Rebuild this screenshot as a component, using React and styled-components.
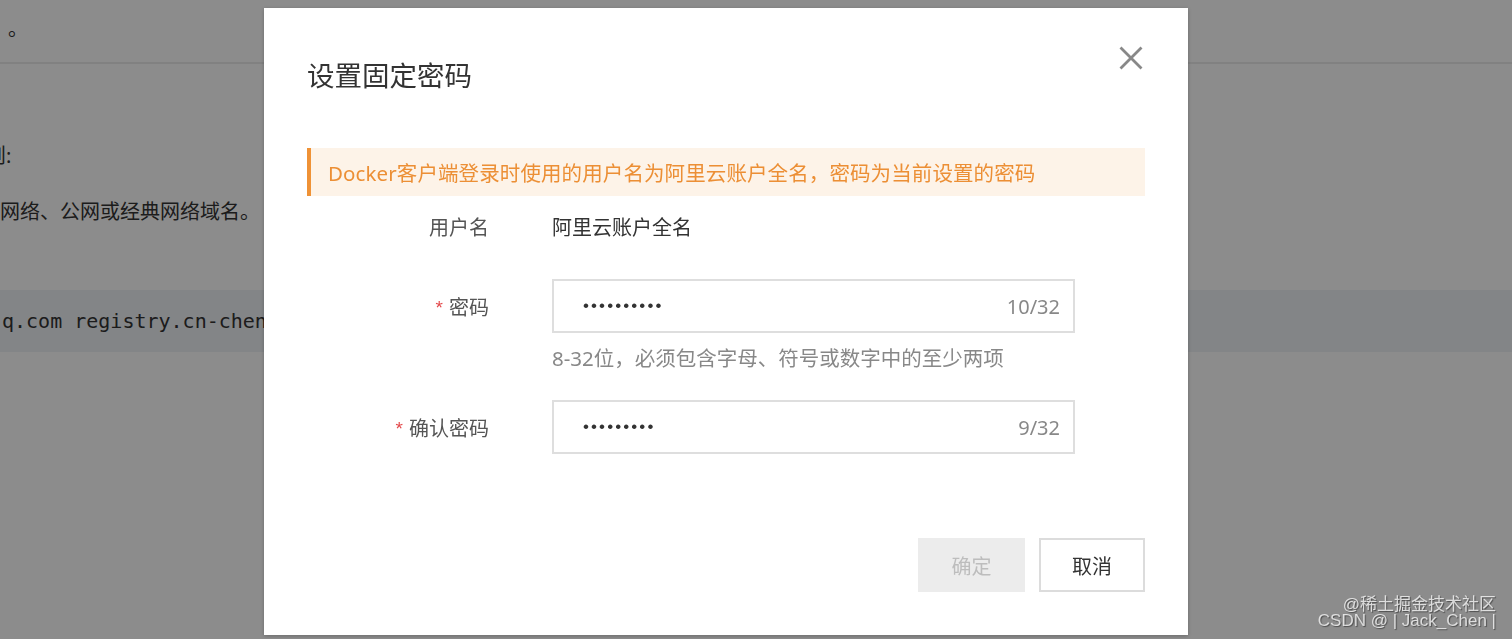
import React from "react";
import styled, { createGlobalStyle } from "styled-components";

const Global = createGlobalStyle`
  html, body { margin: 0; padding: 0; }
  body {
    width: 1512px;
    height: 639px;
    overflow: hidden;
    background: #ffffff;
    font-family: "Noto Sans", "Noto Sans CJK SC", sans-serif;
  }
`;

const Page = styled.div`
  width: 1512px;
  height: 639px;
  overflow: hidden;
  background: #fff;
  color: #222;
`;

const PageTop = styled.div`
  height: 64px;
  box-sizing: border-box;
  border-bottom: 2px solid #ececec;
  padding: 10px 0 0 8px;
  font-size: 20px;
  line-height: 38px;
  color: #333;
  overflow: hidden;
`;

const PageBody = styled.div`
  padding-top: 72px;
  display: flex;
  flex-direction: column;
`;

const PageLine = styled.div`
  font-size: 20px;
  line-height: 40px;
  color: #333;
  white-space: nowrap;
  margin-left: ${(p) => p.$shift || 0}px;
  margin-bottom: ${(p) => p.$gap || 0}px;
`;

const CodeBand = styled.div`
  height: 62px;
  background: #eef2f6;
  display: flex;
  align-items: center;
  padding-left: 2px;
  font-family: "DejaVu Sans Mono", "Liberation Mono", monospace;
  font-size: 20px;
  color: #333;
  white-space: nowrap;
`;

const Mask = styled.div`
  position: fixed;
  inset: 0;
  background: rgba(0, 0, 0, 0.45);
`;

const Watermark = styled.div`
  position: fixed;
  right: 16px;
  bottom: 10px;
  display: flex;
  flex-direction: column;
  align-items: flex-end;
  color: rgba(255, 255, 255, 0.75);
  text-shadow: 1px 1px 1px rgba(0, 0, 0, 0.45);
  font-family: "Liberation Sans", "Noto Sans CJK SC", sans-serif;
  font-size: 17px;
  line-height: 16px;
`;

const Modal = styled.div`
  position: fixed;
  left: 264px;
  top: 8px;
  width: 924px;
  height: 627px;
  box-sizing: border-box;
  background: #fff;
  box-shadow: 0 1px 4px rgba(0, 0, 0, 0.25);
  padding: 48px 43px 0 43px;
  display: flex;
  flex-direction: column;
`;

const Title = styled.h2`
  margin: 0;
  font-size: 27.5px;
  font-weight: 400;
  line-height: 36px;
  color: #333;
  font-family: "Noto Sans CJK SC", sans-serif;
`;

const Close = styled.button`
  position: absolute;
  right: 45px;
  top: 38px;
  width: 24px;
  height: 24px;
  padding: 0;
  border: none;
  background: none;
  cursor: pointer;
  display: flex;
`;

const Alert = styled.div`
  margin-top: 56px;
  height: 48px;
  box-sizing: border-box;
  background: #fdf3e8;
  border-left: 4px solid #ef9236;
  padding-left: 17px;
  display: flex;
  align-items: center;
  color: #ec8f35;
  font-size: 20.5px;
  letter-spacing: 0.1px;
  font-family: "Noto Sans", "Noto Sans CJK SC", sans-serif;
`;

const Form = styled.div`
  display: flex;
  flex-direction: column;
  margin-top: 3px;
`;

const Row = styled.div`
  display: grid;
  grid-template-columns: 182px 523px;
  column-gap: 63px;
  align-items: center;
  margin-top: ${(p) => p.$top || 0}px;
`;

const Label = styled.div`
  height: 54px;
  display: flex;
  align-items: center;
  justify-content: flex-end;
  gap: 6px;
  font-size: 20px;
  color: #555;
  font-family: "Noto Sans CJK SC", sans-serif;
`;

const Star = styled.span`
  color: #e3484a;
  font-family: "Liberation Sans", sans-serif;
  font-size: 19px;
  line-height: 1;
  margin-top: 2px;
`;

const Value = styled.div`
  height: 54px;
  display: flex;
  align-items: center;
  font-size: 20px;
  color: #333;
  font-family: "Noto Sans CJK SC", sans-serif;
`;

const Field = styled.div`
  height: 54px;
  box-sizing: border-box;
  border: 2px solid #dedede;
  display: flex;
  align-items: center;
  padding: 0 13px 0 29px;
`;

const PasswordInput = styled.input`
  flex: 1;
  min-width: 0;
  border: none;
  outline: none;
  background: transparent;
  padding: 0;
  font-family: "Liberation Sans", sans-serif;
  font-size: 17px;
  letter-spacing: 2.1px;
  color: #333;
`;

const Counter = styled.span`
  font-size: 20px;
  color: #888;
  font-family: "Noto Sans", sans-serif;
`;

const Hint = styled.div`
  grid-column: 2;
  font-size: 20.5px;
  line-height: 28px;
  color: #888;
  margin-top: 11px;
  white-space: nowrap;
  font-family: "Noto Sans", "Noto Sans CJK SC", sans-serif;
`;

const Footer = styled.div`
  margin-top: 84px;
  display: flex;
  justify-content: flex-end;
  gap: 14px;
`;

const Button = styled.button`
  width: ${(p) => p.$w}px;
  height: 54px;
  box-sizing: border-box;
  font-size: 20px;
  font-family: "Noto Sans CJK SC", sans-serif;
  cursor: ${(p) => (p.$disabled ? "not-allowed" : "pointer")};
  background: ${(p) => (p.$disabled ? "#ececec" : "#fff")};
  color: ${(p) => (p.$disabled ? "#bdbdbd" : "#333")};
  border: 2px solid ${(p) => (p.$disabled ? "#ececec" : "#dcdcdc")};
  padding: 0;
`;

export default function App() {
  return (
    <>
      <Global />
      <Page>
        <PageTop>。</PageTop>
        <PageBody>
          <PageLine $shift={-14} $gap={16}>则:</PageLine>
          <PageLine $gap={58}>网络、公网或经典网络域名。</PageLine>
          <CodeBand>q.com registry.cn-chengdu.aliyuncs.com</CodeBand>
        </PageBody>
      </Page>
      <Mask />
      <Watermark>
        <span>@稀土掘金技术社区</span>
        <span>CSDN @ | Jack_Chen |</span>
      </Watermark>
      <Modal>
        <Title>设置固定密码</Title>
        <Close aria-label="关闭">
          <svg width="24" height="24" viewBox="0 0 24 24">
            <path d="M1.5 1.5 L22.5 22.5 M22.5 1.5 L1.5 22.5" stroke="#888" strokeWidth="2.8" />
          </svg>
        </Close>
        <Alert>Docker客户端登录时使用的用户名为阿里云账户全名，密码为当前设置的密码</Alert>
        <Form>
          <Row>
            <Label>用户名</Label>
            <Value>阿里云账户全名</Value>
          </Row>
          <Row $top={26}>
            <Label>
              <Star>*</Star>
              <span>密码</span>
            </Label>
            <Field>
              <PasswordInput type="password" value="abcdefgh12" readOnly />
              <Counter>10/32</Counter>
            </Field>
            <Hint>8-32位，必须包含字母、符号或数字中的至少两项</Hint>
          </Row>
          <Row $top={28}>
            <Label>
              <Star>*</Star>
              <span>确认密码</span>
            </Label>
            <Field>
              <PasswordInput type="password" value="abcdefgh1" readOnly />
              <Counter>9/32</Counter>
            </Field>
          </Row>
        </Form>
        <Footer>
          <Button $w={107} $disabled>确定</Button>
          <Button $w={106}>取消</Button>
        </Footer>
      </Modal>
    </>
  );
}
